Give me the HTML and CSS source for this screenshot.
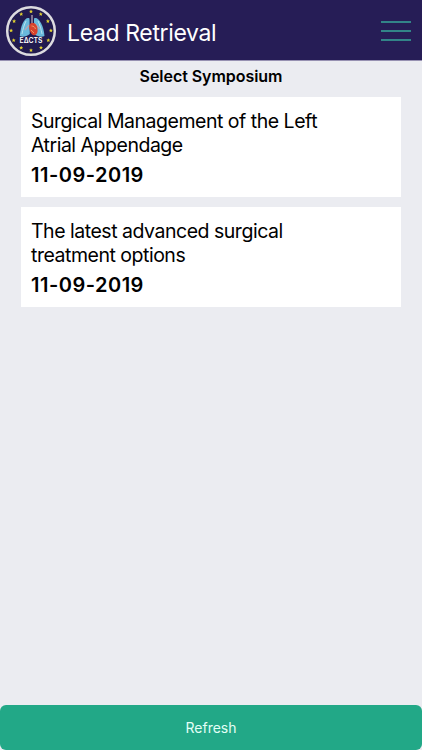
FILE: index.html
```html
<!DOCTYPE html>
<html lang="en">
<head>
    <meta charset="UTF-8">
    <meta name="viewport" content="width=device-width, initial-scale=1">
    <title>Lead Retrieval</title>
    <link rel="stylesheet" href="styles.css">
</head>
<body>
    <header class="header">
        <svg class="logo" viewBox="0 0 52 52" role="img" aria-label="EACTS">
            <defs>
                <path id="star" fill="#e3d32f" d="M0-2.1L.6-.7 2-.6.9.3 1.3 1.8 0 1-1.3 1.8-.9.3-2-.6-.6-.7z"/>
            </defs>
            <circle cx="26" cy="26" r="23.8" fill="#211a4f" stroke="#dcdbdf" stroke-width="2.5"/>
            <use href="#star" x="26" y="6.5"/>
            <use href="#star" x="35.8" y="9.1"/>
            <use href="#star" x="42.9" y="16.2"/>
            <use href="#star" x="45.9" y="25.5"/>
            <use href="#star" x="43.3" y="35.3"/>
            <use href="#star" x="36" y="42.6"/>
            <use href="#star" x="26" y="45.3"/>
            <use href="#star" x="16.2" y="42.8"/>
            <use href="#star" x="8.7" y="35.3"/>
            <use href="#star" x="6.1" y="25.5"/>
            <use href="#star" x="9.1" y="16.2"/>
            <use href="#star" x="16.2" y="9.1"/>
            <!-- lungs and heart -->
            <path fill="#69b9dc" d="M24.5 13.500c-4-2.500-9 6-9.700 17.500 3 1.500 6.500.500 10-2z"/>
            <path fill="#69b9dc" d="M29 13.500c4-2.500 9.500 6 10.500 17.500-3 1.500-7 .500-10.500-2z"/>
            <path fill="none" stroke="#b8e2ef" stroke-width="1" d="M21 16c-2 4-3 8-4 13M33 16c2 4 3 8 4 13"/>
            <path fill="none" stroke="#b8a6b5" stroke-width="1.3" d="M27 10v8M24 20l-4 5M30 19l5 5"/>
            <path fill="#d7422d" d="M26 18c-3 2-2 8 1 11.500 2 1.600 5 .6 5.500-3 .6-3.700-1-7.500-3.500-8.500z"/>
            <path fill="none" stroke="#f0a06a" stroke-width=".9" d="M26.500 21c2 0 3.500 1 4 3M26 25l3 3"/>
            <text class="logo-text" x="26" y="38.4" text-anchor="middle" textLength="23" lengthAdjust="spacingAndGlyphs">EΔCTS</text>
        </svg>
        <h1 class="title">Lead Retrieval</h1>
        <button class="menu" type="button" aria-label="Menu">
            <span></span>
            <span></span>
            <span></span>
        </button>
    </header>

    <main class="content">
        <h2 class="heading">Select Symposium</h2>

        <div class="symposium">
            <p class="name">Surgical Management of the Left<br>Atrial Appendage</p>
            <p class="date">11-09-2019</p>
        </div>

        <div class="symposium">
            <p class="name">The latest advanced surgical<br>treatment options</p>
            <p class="date">11-09-2019</p>
        </div>
    </main>

    <button class="refresh" type="button">Refresh</button>
</body>
</html>
```
FILE: styles.css
```css
* {
    box-sizing: border-box;
}

body {
    display: flex;
    flex-direction: column;
    height: 100vh;
    margin: 0;
    background-color: #ebecf1;
    color: #000;
    font-family: Inter, sans-serif;
}

h1, h2, p {
    margin: 0;
}

button {
    border: 0;
    font-family: inherit;
}

.header {
    display: flex;
    flex: none;
    align-items: center;
    height: 61px;
    padding: 2px 11px 0 5px;
    background-color: #261d56;
    border-bottom: 1px solid #9791b2;
}

.logo {
    width: 52px;
    height: 52px;
}

.logo-text {
    fill: #fff;
    font-size: 7px;
    font-weight: 600;
}

.title {
    flex: 1;
    padding: 4px 0 0 10px;
    color: #fff;
    font-size: 23px;
    font-weight: 400;
    line-height: 30px;
    letter-spacing: -0.37px;
}

.menu {
    display: flex;
    flex-direction: column;
    gap: 7px;
    width: 30px;
    padding: 0;
    background: none;
}

.menu span {
    height: 2px;
    background-color: #328488;
}

.content {
    flex: 1;
    padding: 5px 21px 0;
}

.heading {
    margin-bottom: 11px;
    font-size: 16px;
    font-weight: 600;
    line-height: 20px;
    letter-spacing: -0.05px;
    text-align: center;
}

.symposium {
    height: 100px;
    margin-bottom: 10px;
    padding: 12px 10px;
    background-color: #fff;
}

.name {
    font-size: 19.5px;
    line-height: 24px;
    letter-spacing: -0.48px;
}

.date {
    margin-top: 6px;
    font-size: 20px;
    font-weight: 600;
    line-height: 24px;
    letter-spacing: 0.5px;
}

.refresh {
    flex: none;
    height: 45px;
    padding: 0;
    border-radius: 6px;
    background-color: #22a887;
    color: #e2fff6;
    font-size: 14px;
}
```
